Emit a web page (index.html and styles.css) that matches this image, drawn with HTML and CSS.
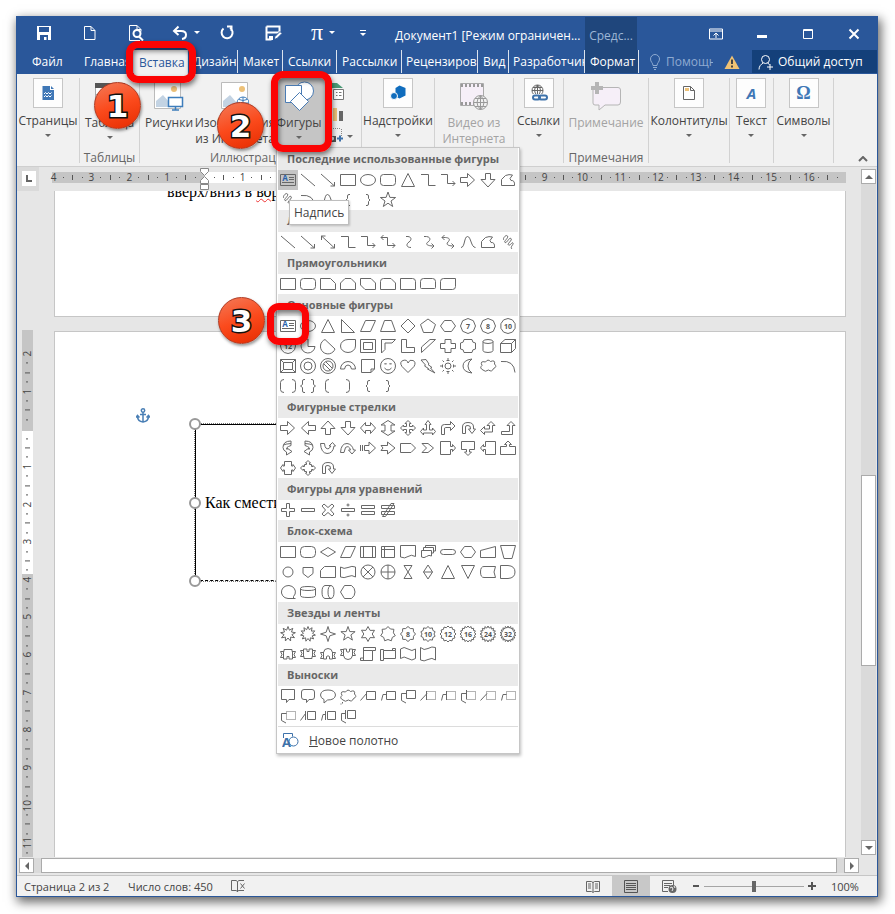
FILE: index.html
```html
<!doctype html>
<html lang="ru">
<head>
    <meta charset="UTF-8">
    <meta name="viewport" content="width=device-width, initial-scale=1.0">
    <title>Документ1 [Режим ограниченной функциональности]</title>
    <link rel="stylesheet" href="styles.css">
</head>
<body>
<div class="window">

    <header class="titlebar">
        <div class="quick">
            <button aria-label="Сохранить"><svg width="16" height="16" viewBox="0 0 16 16"><path d="M1 1h14v14H1z" fill="#fff"/><path d="M3 2h10v5H3zM4 10h8v5h-1.500v-3H8v3H4z" fill="#2a579a"/></svg></button>
            <button aria-label="Создать"><svg width="16" height="16" viewBox="0 0 16 16"><path d="M2.500 1.500h6.500l4 4v9H2.500zM9 1.500v4h4" class="w"/></svg></button>
            <button aria-label="Просмотр"><svg width="16" height="18" viewBox="0 0 16 18"><path d="M12 16.500H1.500v-15H9l4 4v2M9 1.500v4h4" class="w"/><circle cx="9" cy="9.500" r="3.500" class="w2"/><path d="M11 12.500l4 4" class="w2"/></svg></button>
            <button class="wide" aria-label="Отменить"><svg width="16" height="16" viewBox="0 0 16 16"><path d="M6.500 1.500L2 6l4.500 4M2.500 6H9c7 0 6 7.500 1 8" class="w2"/></svg><i class="caret light"></i></button>
            <button class="redo" aria-label="Повторить"><svg width="16" height="16" viewBox="0 0 16 16"><path d="M4.500 3.500A5.500 5.500 0 1 0 11 3M8 1.500h4.500V6" class="w2"/></svg></button>
            <button class="saveas" aria-label="Сохранить как"><svg width="17" height="16" viewBox="0 0 17 16"><path d="M1.500 1.500h13v6M1.500 1.500v13h5" class="w2"/><path d="M2 7.500h12" class="w2"/><path d="M4 11h4v4H4z" fill="#fff"/><path d="M9 14.500l1-3 5-5 2 2-5 5z" fill="#fff" stroke="#2a579a"/></svg></button>
            <button class="pi" aria-label="Уравнение"><span>π</span><i class="caret light"></i></button>
            <button class="more" aria-label="Настройка"><svg width="8" height="8" viewBox="0 0 8 8"><path d="M1 1.500h6" class="w"/><path d="M1 4h6L4 7z" fill="#fff"/></svg></button>
        </div>
        <div class="title">Документ1 [Режим ограничен...</div>
        <div class="context">Средс...</div>
        <div class="winbtns">
            <button aria-label="Параметры ленты"><svg width="14" height="12" viewBox="0 0 14 12"><path d="M.5 1h13v10H.5zM.5 3h13M7 10V5M4.500 7.500L7 5l2.500 2.500" class="w"/></svg></button>
            <button aria-label="Свернуть"><svg width="12" height="12" viewBox="0 0 12 12"><path d="M1 8.500h10" class="w3"/></svg></button>
            <button aria-label="Развернуть"><svg width="12" height="12" viewBox="0 0 12 12"><path d="M1.500 1.500h9v9h-9zM1 2.500h10" class="w"/></svg></button>
            <button aria-label="Закрыть"><svg width="12" height="12" viewBox="0 0 12 12"><path d="M1.500 1.500l9 9M10.500 1.500l-9 9" class="w2"/></svg></button>
        </div>
    </header>

    <nav class="tabs">
        <button class="file">Файл</button>
        <button class="home">Главная</button>
        <button class="active">Вставка</button>
        <button class="design">Дизайн</button>
        <button class="layout">Макет</button>
        <button class="refs">Ссылки</button>
        <button class="mail">Рассылки</button>
        <button class="review">Рецензирование</button>
        <button class="view">Вид</button>
        <button class="dev">Разработчик</button>
        <button class="format">Формат</button>
        <button class="tell"><svg width="12" height="16" viewBox="0 0 12 16"><path d="M4 11.500C4 9 1.500 8 1.500 5a4.500 4.500 0 0 1 9 0c0 3-2.500 4-2.500 6.500zM4 13.500h4M5 15.500h2"/></svg><span>Помощник</span></button>
        <svg class="warn" width="16" height="14" viewBox="0 0 16 14"><path d="M8 0.500L15.500 14H0.500z" fill="#f0c274"/><path d="M7 4.500h2v4.500H7zM7 10.500h2v2H7z" fill="#444"/></svg>
        <button class="share"><svg width="16" height="16" viewBox="0 0 16 16"><circle cx="7.500" cy="5.500" r="4" class="w"/><path d="M1 15.500c0-3.500 2-5 4-6.500M9.500 9l2 1.500M12 10v6M9 13h6" class="w"/></svg>Общий доступ</button>
    </nav>

    <div class="ribbon">
        <div class="group pages">
            <button class="cmd"><span class="box"><svg width="12" height="14" viewBox="0 0 12 14"><path d="M.5 0H8v4h4v10H.5z" fill="#3f77b6"/><path d="M9 0l3 3H9z" fill="#3f77b6"/><path d="M2 8l1.500-1.500L5 8l1.500-1.500L8 8l1.500-1.500M2 11l1.500-1.500L5 11l1.500-1.500L8 11l1.500-1.500" fill="none" stroke="#fff"/></svg></span>Страницы<i class="caret"></i></button>
        </div>
        <div class="group tables">
            <button class="cmd"><svg class="ico" width="30" height="28" viewBox="0 0 30 28"><path d="M.5 5.500h29v22H.5zM.5 12.500h29M.5 20h29M10 5v22M20 5v22" fill="#fff" stroke="#aaa"/><path d="M0 1h30v5H0z" fill="#555"/></svg>Таблица<i class="caret"></i></button>
            <div class="name">Таблицы</div>
        </div>
        <div class="group pics">
            <div class="row">
                <button class="cmd c1"><svg class="ico" width="30" height="30" viewBox="0 0 30 30"><path d="M.5 1.500h26v26H.5z" fill="#fff" stroke="#bbb"/><circle cx="20" cy="8" r="3" fill="#edc178"/><path d="M2 26V20l7-6 7 8v4z" fill="#c3d3e3"/><path d="M14.500 16.500h14v9h-14z" fill="#fff" stroke="#3e7dbb" stroke-width="1.500"/><path d="M18 29h7M21.500 26v3" stroke="#3e7dbb" stroke-width="1.500"/></svg>Рисунки</button>
                <button class="cmd c2"><svg class="ico" width="28" height="30" viewBox="0 0 28 30"><path d="M.5 1.500h26v26H.5z" fill="#fff" stroke="#bbb"/><circle cx="21" cy="8" r="3" fill="#edc178"/><path d="M2 26V20l7-6 7 8v4z" fill="#c3d3e3"/><circle cx="22" cy="22" r="6" fill="#fff" stroke="#3e7dbb"/><path d="M16 22h12M22 16v12M18 18.500q4 2 8 0" fill="none" stroke="#3e7dbb"/></svg>Изображения<br>из Интернета</button>
                <div class="shapes">
                    <button class="cmd on"><svg class="ico" width="30" height="30" viewBox="0 0 30 30"><g fill="#fff" stroke="#4b7cb4"><circle cx="20.500" cy="10" r="9"/><path d="M1.500 4.500h16v17h-16z"/><path d="M15.500 11.500l9 9-9 9-9-9z"/></g></svg>Фигуры<i class="caret"></i></button>
                    <div class="menu" id="menu">
                        <div id="gallery"></div>
                        <button class="canvas"><svg width="17" height="16" viewBox="0 0 17 16"><path d="M1.500 6V1.500h9v3" fill="none" stroke="#3e72aa"/><circle cx="11.500" cy="9.500" r="4.500" fill="none" stroke="#3e72aa"/><text x="0" y="15" font-size="13" font-weight="700" fill="#3e72aa">A</text></svg><span><u>Н</u>овое полотно</span></button>
                        <div class="tip" role="tooltip">Надпись</div>
                    </div>
                </div>
                <div class="mini">
                    <svg width="18" height="18" viewBox="0 0 18 18"><path d="M0 0h10l6 5H0z" fill="#4a9a76"/><path d="M6.500 6.500h10v10h-10z" fill="#fff" stroke="#777"/><path d="M9 9.500h1.500M12 9.500h2.500M9 12.500h1.500M12 12.500h2.500" stroke="#777"/></svg>
                    <svg width="18" height="15" viewBox="0 0 18 15"><path d="M1 3h3v11H1z" fill="#3e72aa"/><path d="M6 1h4v13H6z" fill="#edc178"/><path d="M12 4h4v10h-4z" fill="#666"/></svg>
                    <span><svg width="18" height="16" viewBox="0 0 18 16"><path d="M2 .5h12M14.500 1v8" stroke="#888" stroke-dasharray="1 1"/><path d="M0 6h4l1 2h4v6H0z" fill="#555"/><circle cx="5" cy="10.500" r="2" fill="#eee"/><path d="M13 7.500v6M10 10.500h6" stroke="#3e72aa" stroke-width="2"/></svg><i class="caret"></i></span>
                </div>
            </div>
            <div class="name">Иллюстрации</div>
        </div>
        <div class="group addins">
            <button class="cmd"><span class="box"><svg width="16" height="16" viewBox="0 0 16 16"><path d="M9.500.5l6 2.500v7.500l-6 3-4-2V3z" fill="#0f6cbd"/><circle cx="4" cy="11" r="3.500" fill="#0f6cbd" stroke="#fdfdfd"/></svg></span>Надстройки<i class="caret"></i></button>
        </div>
        <div class="group video">
            <button class="cmd off" disabled><svg class="ico" width="30" height="28" viewBox="0 0 30 28"><path d="M1.500 1.500h23v22h-23z" fill="#f6eff8" stroke="#aaa"/><path d="M2 3.500h22M2 21.500h22" stroke="#999" stroke-width="3" stroke-dasharray="2 2"/><circle cx="21.500" cy="20.500" r="7" fill="#f1f1f1" stroke="#999"/><path d="M14.500 20.500h14M21.500 13.500v14M16 16.500h11M16 24.500h11M21.500 13.500q-7 7 0 14M21.500 13.500q7 7 0 14" fill="none" stroke="#999"/></svg>Видео из<br>Интернета</button>
        </div>
        <div class="group links">
            <button class="cmd"><span class="box"><svg width="18" height="18" viewBox="0 0 18 18"><g fill="none" stroke="#666"><circle cx="7.500" cy="6.500" r="5.500"/><path d="M2 6.500h11M7.500 1v10M7.500 1q-6 5 0 11M7.500 1q6 5 0 11M3 3.500h9"/></g><path d="M0 10h18v8H0z" fill="#fdfdfd"/><g fill="none" stroke="#3e72aa" stroke-width="2"><rect x="3" y="11.500" width="7" height="4" rx="2"/><rect x="9" y="11.500" width="8" height="4" rx="2"/></g></svg></span>Ссылки<i class="caret"></i></button>
        </div>
        <div class="group notes">
            <button class="cmd off" disabled><svg class="ico" width="32" height="30" viewBox="0 0 32 30"><path d="M5 6.500h23q2.500 0 2.500 2.500v12q0 3-2.500 3H15l-6 5v-5H5q-2 0-2-2V8z" fill="#f6eff8" stroke="#b5b5b5"/><path d="M7 1v12M1 7h12" stroke="#b5b5b5" stroke-width="4"/></svg>Примечание</button>
            <div class="name">Примечания</div>
        </div>
        <div class="group headers">
            <button class="cmd"><span class="box"><svg width="12" height="14" viewBox="0 0 12 14"><path d="M.5.500h7l4 4v9H.500zM7.500.500v4h4" fill="#fff" stroke="#666"/><path d="M2 2h4v3H2z" fill="#edc178"/></svg></span>Колонтитулы<i class="caret"></i></button>
        </div>
        <div class="group text">
            <button class="cmd"><span class="box letter"><em>A</em></span>Текст<i class="caret"></i></button>
        </div>
        <div class="group symbols">
            <button class="cmd"><span class="box letter">Ω</span>Символы<i class="caret"></i></button>
        </div>
        <button class="collapse" aria-label="Свернуть ленту"><svg width="10" height="6" viewBox="0 0 10 6"><path d="M1 5l4-4 4 4" fill="none" stroke="#666" stroke-width="2"/></svg></button>
    </div>

    <main class="work">
        <div class="hrow">
            <div class="corner"><i></i></div>
            <div class="hruler"><div id="hruler"></div>
                <svg class="indent" width="11" height="23" viewBox="0 0 11 23"><path d="M1.500.500h8v3l-4 4-4-4zM5.500 8.500l4 4v3h-8v-3zM1.500 16.500h8v5h-8z" fill="#fff" stroke="#888"/></svg>
            </div>
        </div>
        <div class="vcol"><div class="vruler" id="vruler"></div></div>
        <div class="pages-area">
            <section class="page first"><p>вверх/вниз в <span class="err">ворде</span></p></section>
            <section class="page second">
                <svg class="anchor" width="14" height="15" viewBox="0 0 14 15"><g fill="none" stroke="#4a7fb5" stroke-width="1.500"><circle cx="7" cy="2.500" r="1.700"/><path d="M7 4v10M4 6.500h6M1.500 8q0 5.500 5.500 6 5.500-.5 5.500-6M0 9.500l1.500-2 2 2M10.500 9.500l2-2 1.500 2"/></g></svg>
                <div class="frame"><span>Как сместить текст</span><i class="h tl"></i><i class="h ml"></i><i class="h bl"></i></div>
            </section>
        </div>
        <div class="vscroll">
            <button aria-label="Вверх"><i class="tri up"></i></button>
            <div class="track"><div class="thumb"></div></div>
            <button aria-label="Вниз"><i class="tri down"></i></button>
        </div>
        <div class="hscroll">
            <button aria-label="Влево"><i class="tri left"></i></button>
            <div class="thumb"></div>
            <button aria-label="Вправо"><i class="tri right"></i></button>
        </div>
    </main>

    <footer class="status">
        <span class="pagenum">Страница 2 из 2</span>
        <span class="words">Число слов: 450</span>
        <svg width="15" height="13" viewBox="0 0 15 13"><path d="M6.500 11.500L5 10.500H.5v-10H5l1.500 1zM6.500 1.500L8 .5h5M6.500 12v-1l1.500-.500h5M9.500 3.500l4 5M13.500 3.500l-4 5" fill="none" stroke="#666"/></svg>
        <div class="right">
            <button aria-label="Режим чтения"><svg width="14" height="13" viewBox="0 0 14 13"><path d="M7 12.500l-1.500-1h-5v-10h5l1.500 1 1.500-1h5v10h-5zM7 2v10M2 4h3M2 6h3M2 8h3M9 4h3M9 6h3M9 8h3" fill="none" stroke="#666"/></svg></button>
            <button class="on" aria-label="Разметка страницы"><svg width="14" height="13" viewBox="0 0 14 13"><path d="M.5.500h13v12H.5zM2 3.500h10M2 5.500h10M2 7.500h10M2 9.500h10" fill="none" stroke="#555"/></svg></button>
            <button aria-label="Веб-документ"><svg width="15" height="13" viewBox="0 0 15 13"><path d="M6 11.500H.5V.500h11v5M2 3.500h8M2 5.500h6M2 7.500h4" fill="none" stroke="#666"/><circle cx="10.500" cy="9" r="4" fill="#666"/><path d="M8 8l2-1 1 2-1 2M12 6l1 2" fill="none" stroke="#f1f1f1"/></svg></button>
            <button class="zoom" aria-label="Уменьшить"><svg width="8" height="8" viewBox="0 0 8 8"><path d="M1 4h6" stroke="#555" stroke-width="2"/></svg></button>
            <input type="range" min="0" max="100" value="50" aria-label="Масштаб">
            <button class="zoom" aria-label="Увеличить"><svg width="8" height="8" viewBox="0 0 8 8"><path d="M0 4h8M4 0v8" stroke="#555" stroke-width="2"/></svg></button>
            <span class="percent">100%</span>
        </div>
    </footer>

    <!-- шаги инструкции -->
    <div class="mark m1"></div>
    <div class="mark m2"></div>
    <div class="mark m3"></div>
    <div class="step s1">1</div>
    <div class="step s2">2</div>
    <div class="step s3">3</div>
</div>
<script src="shapes.js"></script>
</body>
</html>
```
FILE: styles.css
```css
* {
    box-sizing: border-box;
}
body {
    margin: 0;
    padding: 16px 17px 17px 16px;
    height: 100vh;
    display: flex;
    background: #fff;
    font-family: "Open Sans", "Noto Sans", sans-serif;
    font-size: 12px;
    color: #444;
}
button {
    margin: 0;
    padding: 0;
    border: 0;
    background: none;
    font: inherit;
    color: inherit;
    white-space: nowrap;
}
svg {
    display: block;
    flex: none;
}
.window {
    position: relative;
    flex: 1;
    min-width: 0;
    display: flex;
    flex-direction: column;
    border: 1px solid #2a579a;
    background: #e6e6e6;
    box-shadow: 2px 4px 10px 1px rgba(0, 0, 0, .6);
}
.w, .w2, .w3 {
    fill: none;
    stroke: #fff;
    stroke-width: 1;
}
.w2 {
    stroke-width: 2;
}
.w3 {
    stroke-width: 3;
}
.caret {
    border: 3px solid transparent;
    border-top-color: #666;
    border-bottom: 0;
}
.caret.light {
    border-top-color: #fff;
}

/* title bar */
.titlebar {
    flex: none;
    height: 33px;
    display: flex;
    background: #2a579a;
    color: #fff;
}
.quick {
    display: flex;
    padding-left: 4px;
}
.quick button {
    width: 46px;
    padding-bottom: 2px;
    display: flex;
    align-items: center;
    justify-content: center;
    gap: 6px;
}
.quick .wide {
    width: 48px;
    padding-left: 6px;
}
.quick .redo {
    width: 40px;
}
.quick .saveas {
    width: 52px;
}
.quick .pi {
    width: 48px;
}
.pi span {
    font: 24px "Liberation Serif", serif;
}
.quick .more {
    width: 32px;
}
.title {
    width: 206px;
    padding-left: 16px;
    line-height: 37px;
    white-space: nowrap;
}
.context {
    width: 52px;
    background: #1f467c;
    color: #9db6d6;
    text-align: center;
    line-height: 37px;
}
.winbtns {
    margin-left: auto;
    display: flex;
}
.winbtns button {
    width: 46px;
    display: flex;
    align-items: center;
    justify-content: center;
}

/* tabs */
.tabs {
    flex: none;
    height: 24px;
    display: flex;
    background: #2a579a;
    color: #fff;
}
.tabs button {
    flex: none;
    overflow: hidden;
    text-align: left;
    padding-left: 5px;
    margin-bottom: 1px;
    line-height: 23px;
    border-right: 1px solid #dbe3ee;
}
.tabs .file {
    width: 62px;
    padding-left: 15px;
    border: 0;
}
.tabs .home {
    width: 55px;
}
.tabs .active {
    width: 54px;
    margin-bottom: 0;
    background: #f1f1f1;
    color: #2a579a;
}
.tabs .design {
    width: 50px;
}
.tabs .layout {
    width: 45px;
}
.tabs .refs {
    width: 54px;
}
.tabs .mail {
    width: 65px;
}
.tabs .review {
    width: 76px;
    padding-left: 4px;
}
.tabs .view {
    width: 31px;
}
.tabs .dev {
    width: 76px;
    padding-left: 4px;
}
.tabs .format {
    width: 54px;
    background: #1f467c;
}
.tabs .tell {
    width: 75px;
    padding-left: 10px;
    border: 0;
    display: flex;
    align-items: center;
    gap: 5px;
    color: #8fabd1;
}
.tell path {
    fill: none;
    stroke: #8fabd1;
}
.tell span {
    width: 47px;
    overflow: hidden;
}
.warn {
    margin: 5px 12px 0 10px;
}
.tabs .share {
    flex: 1;
    display: flex;
    align-items: center;
    gap: 4px;
    padding-left: 6px;
    border: 0;
    background: #14407a;
}

/* ribbon */
.ribbon {
    flex: none;
    height: 93px;
    display: flex;
    padding: 4px 0 3px;
    background: #f1f1f1;
    border-bottom: 1px solid #cfcfcf;
}
.group {
    flex: none;
    display: flex;
    flex-direction: column;
    align-items: center;
    border-right: 1px solid #d2d2d2;
}
.pages {
    width: 63px;
}
.tables {
    width: 60px;
}
.pics {
    width: 222px;
}
.addins {
    width: 73px;
}
.video {
    width: 79px;
}
.links {
    width: 50px;
}
.notes {
    width: 85px;
}
.headers {
    width: 81px;
}
.text {
    width: 44px;
}
.symbols {
    width: 60px;
}
.cmd {
    display: flex;
    flex-direction: column;
    align-items: center;
    line-height: 16px;
    text-align: center;
}
.cmd.off {
    color: #a3a3a3;
}
.cmd .caret {
    margin-top: 5px;
}
.box {
    width: 30px;
    height: 30px;
    margin-bottom: 5px;
    display: flex;
    align-items: center;
    justify-content: center;
    background: #fdfdfd;
    border: 1px solid #c6c6c6;
}
.ico {
    height: 30px;
    margin: 3px 0 4px;
}
.letter {
    font: 700 18px "Liberation Serif", serif;
    color: #3f77b6;
}
.letter em {
    font-family: "Open Sans", sans-serif;
    font-size: 15px;
}
.name {
    margin-top: auto;
    line-height: 10px;
    color: #666;
}
.row {
    display: flex;
    align-self: stretch;
    padding-left: 1px;
}
.cmd.c1 {
    width: 56px;
}
.cmd.c2 {
    width: 76px;
}
.shapes {
    position: relative;
    width: 52px;
}
.cmd.on {
    width: 52px;
    height: 70px;
    background: #c5c5c5;
}
.mini {
    padding: 5px 0 0 2px;
    display: flex;
    flex-direction: column;
    gap: 6px;
}
.mini span {
    display: flex;
    align-items: center;
    gap: 2px;
}
.collapse {
    margin: auto 9px 1px auto;
}

/* shapes drop-down */
.menu {
    position: absolute;
    z-index: 5;
    left: 3px;
    top: 69px;
    width: 244px;
    padding: 0 1px;
    background: #fff;
    border: 1px solid #c6c6c6;
    box-shadow: 1px 2px 3px rgba(0, 0, 0, .25);
}
.menu h3 {
    margin: 0;
    padding-left: 9px;
    height: 22px;
    line-height: 22px;
    font-size: 11px;
    font-weight: 700;
    white-space: nowrap;
    color: #666;
    background: #eaeaea;
}
.cells {
    display: grid;
    grid-template-columns: repeat(12, 20px);
}
.cells button {
    width: 20px;
    height: 20px;
}
.cells button.sel {
    background: #c5c5c5;
}
.cells svg {
    fill: none;
    stroke: #686868;
}
.cells text {
    stroke: none;
    fill: #555;
    font-size: 7px;
    font-weight: 700;
    text-anchor: middle;
}
.cells .a {
    fill: #2a62ab;
    font-size: 8px;
}
.canvas {
    width: 100%;
    height: 27px;
    padding-left: 4px;
    display: flex;
    align-items: center;
    gap: 10px;
    border-top: 1px solid #dcdcdc;
}
.tip {
    position: absolute;
    left: 12px;
    top: 52px;
    padding: 0 4px;
    line-height: 23px;
    background: #fff;
    border: 1px solid #bebebe;
    box-shadow: 1px 1px 2px rgba(0, 0, 0, .2);
}

/* document area */
.work {
    flex: 1;
    min-height: 0;
    display: grid;
    grid-template-columns: 37px 1fr 31px;
    grid-template-rows: 24px minmax(0, 1fr) 18px;
}
.hrow {
    grid-column: 1 / 3;
    display: flex;
}
.corner {
    width: 22px;
    padding: 4px 3px 3px 5px;
    background: #dadada;
}
.corner i {
    display: block;
    height: 15px;
    background: #fff;
    border: 4px solid #fff;
    box-shadow: inset 2px -2px #666;
}
.hruler {
    position: relative;
    flex: 1;
    margin: 5px 0 8px 10px;
    padding-right: 4px;
    background: linear-gradient(90deg, transparent 3px, #c5c5c5 3px, #c5c5c5 155px, #fff 155px, #fff 420px, #c5c5c5 420px);
}
.hruler > div {
    display: grid;
    grid-template-columns: repeat(84, minmax(0, 1fr));
}
.indent {
    position: absolute;
    left: 150px;
    top: -4px;
}
.mk {
    display: flex;
    align-items: center;
    justify-content: center;
    height: 11px;
    font-size: 10px;
    line-height: 11px;
    color: #444;
}
.mk i {
    flex: none;
    width: 1px;
    height: 5px;
    background: #555;
}
.mk .dot {
    height: 1px;
}
.vcol {
    min-height: 0;
    padding: 139px 21px 0 5px;
}
.vruler {
    height: 100%;
    overflow: hidden;
    padding-top: 19px;
    display: grid;
    grid-template-rows: repeat(54, minmax(0, 1fr));
    background: linear-gradient(#c5c5c5 101px, #fff 101px, #fff 244px, #c5c5c5 244px);
}
.vruler .mk {
    height: auto;
    writing-mode: vertical-rl;
    transform: rotate(180deg);
}
.vruler .mk i {
    width: 5px;
    height: 1px;
}
.vruler .mk .dot {
    width: 2px;
}
.pages-area {
    min-height: 0;
    display: flex;
    flex-direction: column;
    gap: 14px;
}
.page {
    position: relative;
    overflow: hidden;
    background: #fff;
    border: 1px solid #c6c6c6;
    font: 16px "Liberation Serif", serif;
    color: #000;
}
.first {
    flex: none;
    height: 126px;
    border-top: 0;
}
.first p {
    margin: 0 112px;
    line-height: 1px;
}
.err {
    text-decoration: underline wavy #e33 1px;
}
.second {
    flex: 1;
    border-bottom: 0;
    padding: 76px 0 0 81px;
}
.frame {
    position: relative;
    width: 240px;
    height: 157px;
    margin: 1px 0 0 59px;
    padding-left: 9px;
    display: flex;
    align-items: center;
    border: 1px solid #000;
    border-bottom-style: dashed;
    outline: 1px dotted #777;
}
.h {
    position: absolute;
    left: -7px;
    width: 12px;
    height: 12px;
    border: 2px solid #999;
    border-radius: 50%;
    background: #fff;
}
.tl {
    top: -7px;
}
.ml {
    top: 72px;
}
.bl {
    bottom: -7px;
}

/* scroll bars */
.vscroll {
    grid-column: 3;
    grid-row: 1 / 3;
    margin: 2px 0 2px auto;
    width: 16px;
    display: flex;
    flex-direction: column;
}
.vscroll button,
.hscroll button {
    flex: none;
    width: 15px;
    height: 15px;
    display: flex;
    align-items: center;
    justify-content: center;
    background: #fff;
    border: 1px solid #ababab;
}
.track {
    flex: 1;
    width: 15px;
    padding-top: 291px;
    background: #dadada;
}
.track .thumb {
    height: 191px;
}
.thumb {
    background: #fff;
    border: 1px solid #ababab;
}
.hscroll {
    grid-column: 1 / 4;
    margin: 1px 18px 2px 2px;
    display: flex;
    gap: 7px;
    background: #dadada;
}
.hscroll .thumb {
    flex: 1;
}
.tri {
    border: 4px solid transparent;
}
.up {
    border-top: 0;
    border-bottom-color: #666;
}
.down {
    border-bottom: 0;
    border-top-color: #666;
}
.left {
    border-left: 0;
    border-right-color: #666;
}
.right.tri {
    border-right: 0;
    border-left-color: #666;
}

/* status bar */
.status {
    flex: none;
    height: 21px;
    display: flex;
    align-items: center;
    padding-left: 7px;
    background: #f1f1f1;
    border-top: 1px solid #c6c6c6;
    font-size: 11px;
}
.pagenum {
    width: 104px;
}
.words {
    width: 103px;
}
.status .right {
    margin-left: auto;
    align-self: stretch;
    display: flex;
    align-items: center;
}
.status button {
    width: 38px;
    align-self: stretch;
    display: flex;
    align-items: center;
    justify-content: center;
}
.status button.on {
    background: #c8c8c8;
}
.status .zoom {
    width: 16px;
}
.status input {
    width: 100px;
    height: 12px;
    margin: 0;
    appearance: none;
    background: linear-gradient(#a5a5a5, #a5a5a5) center / 100% 1px no-repeat;
}
.status input::-webkit-slider-thumb {
    appearance: none;
    width: 4px;
    height: 11px;
    background: #666;
}
.percent {
    width: 57px;
    padding-left: 11px;
}

/* red frames and numbers */
.mark {
    position: absolute;
    z-index: 8;
    border: 7px solid #fb0404;
    border-radius: 12px;
    box-shadow: 1px 3px 5px rgba(0, 0, 0, .5), inset 1px 3px 5px rgba(0, 0, 0, .5);
}
.m1 {
    left: 109px;
    top: 24px;
    width: 70px;
    height: 42px;
}
.m2 {
    left: 254px;
    top: 54px;
    width: 61px;
    height: 81px;
}
.m3 {
    left: 250px;
    top: 286px;
    width: 42px;
    height: 42px;
}
.step {
    position: absolute;
    z-index: 9;
    width: 47px;
    height: 47px;
    border-radius: 50%;
    background: linear-gradient(160deg, #f37a58, #fb4a1c 50%, #e62c00);
    border: 1px solid #b03a22;
    box-shadow: 1px 2px 3px rgba(0, 0, 0, .4);
    color: #fff;
    font: 700 31px/46px "DejaVu Sans", sans-serif;
    text-align: center;
    -webkit-text-stroke: 3px #111;
    paint-order: stroke fill;
}
.s1 {
    left: 77px;
    top: 65px;
}
.s2 {
    left: 200px;
    top: 85px;
}
.s3 {
    left: 201px;
    top: 280px;
}
```
FILE: shapes.js
```js
// outlines are drawn in a 20x20 cell
function oval(x, y, rx, ry) {
    ry = ry || rx
    return 'M' + (x - rx) + ' ' + y + 'a' + rx + ' ' + ry + ' 0 1 0 ' + 2 * rx + ' 0a' + rx + ' ' + ry + ' 0 1 0 ' + -2 * rx + ' 0'
}

function star(n, r1, r2) {
    var p = []
    for (var i = 0; i < n * 2; i++) {
        var r = i % 2 ? r2 : r1
        var a = Math.PI * i / n - Math.PI / 2
        p.push((10 + r * Math.cos(a)).toFixed(1) + ' ' + (10 + r * Math.sin(a)).toFixed(1))
    }
    return 'M' + p.join('L') + 'z'
}

function poly(n, r) {
    return star(n / 2, r, r)
}

var rect = 'M2.5 4.5H17.5V15.5H2.5z'
var textbox = rect + 'M11 7.5h5M11 9.5h5M4 12.5h12'
var ellipse = oval(10, 10, 7.5, 5.5)
var round = 'M5.5 4.5H14.5q3 0 3 3V12.500q0 3-3 3H5.5q-3 0-3-3V7.5q0-3 3-3z'
var line = 'M3 4L17 16'
var lineArrow = 'M3 4L16.5 16M16.500 12v4h-4'
var elbow = 'M3 4.5H10.5V15.5H17.5'
var elbowArrow = 'M3 4.5H9.5V13.5H17M14.500 11l2.500 2.500-2.500 2.500'
var triangle = 'M10 3.5L16.5 16.5H3.5z'
var arrowR = 'M2.5 7.5H9.5V3.5L16.5 10 9.5 16.5V12.5H2.5z'
var arrowL = 'M17.5 7.5H10.5V3.500L3.5 10 10.500 16.5V12.500H17.500z'
var arrowD = 'M7.500 3.500H12.500V9.500H17L10 17 3 9.500H7.500z'
var arrowU = 'M7.500 16.500H12.500V10.500H17L10 3 3 10.500H7.500z'
var free = 'M3.5 15.5V9.5L7.500 5.5Q11 4 14.500 5L12 8.500 13 10.5Q17 10 16.500 15.5z'
var scribble = 'M6 8C4 7 8 2 9.500 4S5 9.500 7 10.500 11 5 13 6.500 8.500 12 10.500 13 14 9.500 15 11 11.500 15 14 17'
var arc = 'M3 5.5Q16 4 17 16.500'
var curve = 'M3 15.5C7 15.500 6 4.5 9.5 4.5S13 15.5 17.500 15.5'
var braceL = 'M12 4.500h-1q-1.500 0-1.500 1.500v2.500L8 10l1.500 1.500V14q0 1.500 1.500 1.500h1'
var braceR = 'M8 4.500h1q1.500 0 1.500 1.500v2.500L12 10l-1.500 1.500V14q0 1.500-1.500 1.500h-1'
var diamond = 'M10 3L17 10 10 17 3 10z'
var para = 'M7.500 4.5H17.5L12.500 15.5H2.500z'
var hexa = 'M6.500 4.5H13.500L17.5 10 13.500 15.5H6.500L2.5 10z'
var frame = 'M2.5 3.500H17.5V16.500H2.5zM5.500 6.500H14.500V13.500H5.500z'
var cloud = 'M5 14Q1 12 4 9.500 1.500 4.500 7.500 6 10 2.500 12.500 5.500 17.500 3.500 16.500 8 19.500 11 15.500 12.500 14 16.500 10.500 14 7 16.500 5 14z'
var uturn = 'M4.500 15.500V9Q4.500 4.500 10 4.500T15.500 9V11H17.500L14 15.500 10.500 11H12.500Q13 7.500 10 7.500T7.500 9V15.500z'

var groups = [
    ['Последние использованные фигуры', [
        [textbox, 'A'], line, lineArrow, rect, ellipse, round, triangle, elbow, elbowArrow, arrowR, arrowD, free,
        scribble, arc, curve, braceL, braceR, star(5, 8, 3.2)
    ]],
    ['Линии', [
        line, lineArrow, 'M3.500 4L16.5 16M16.500 12v4h-4M3.500 8V4h4', elbow, elbowArrow,
        'M3 5.500H9.5V13.5H17M14.500 11l2.500 2.500-2.500 2.500M5.500 3L3 5.500 5.500 8',
        'M8 4.500C14 4 14 8 11 10S8 15.5 13 15.5',
        'M6 4.500C13 4 13 8 10 10S9 14 16 14M13.500 11.500l2.500 2.500-2.500 2.500',
        'M4 5.500C13 5 12 8 10 10S9 14 16 14M13.500 11.500l2.500 2.500-2.500 2.500M6.500 3L4 5.500 6.500 8',
        curve, free, scribble
    ]],
    ['Прямоугольники', [
        rect, round,
        'M2.5 4.5H12.500L17.5 9.500V15.5H2.5z',
        'M7 4.5H13L17.5 9V15.5H2.5V9z',
        'M2.5 4.5H13L17.5 9V15.5H7L2.5 11z',
        'M5.5 4.5H13L17.5 9V15.5H2.5V7.5q0-3 3-3z',
        'M2.5 4.5H14.5q3 0 3 3V15.5H2.5z',
        'M5.5 4.5H14.5q3 0 3 3V13.500q0 1-1 1H3.500q-1 0-1-1V7.5q0-3 3-3z',
        'M5.5 4.5H17.5V12.5q0 3-3 3H2.5V7.5q0-3 3-3z'
    ]],
    ['Основные фигуры', [
        [textbox, 'A'], ellipse, triangle, 'M3.500 3.500V16.500H16.500z', para, 'M6.500 4.500H13.500L17.5 15.500H2.500z',
        diamond, 'M10 3L17.500 8.500 14.500 16.500H5.500L2.500 8.500z', hexa,
        [poly(8, 7.5), '7'], [poly(8, 7.5), '8'], [poly(10, 7.5), '10'],
        [poly(12, 7.5), '12'],
        'M10 3A7 7 0 1 0 17 10.500H10z', 'M7 3.500A7.500 7.500 0 1 0 17 13z',
        'M17.500 3.500V10A7.500 6.500 0 1 1 10 3.500z', frame,
        'M3.500 3.500H17.500L14 7H7V13.500L3.500 17z', 'M3.500 3.500H8.500V11.500H16.500V16.500H3.500z',
        'M3.500 16.500V11L12 3.500H17.500z', 'M7 3.500H13V7.500H17.5V12.500H13V16.500H7V12.500H2.5V7.500H7z',
        'M6 3.500H14Q14 7 17.500 7V13Q14 13 14 16.500H6Q6 13 2.500 13V7Q6 7 6 3.500z',
        'M5 5.500Q5 3.500 10 3.500T15 5.500V14.500Q15 16.500 10 16.500T5 14.500zM5 5.500Q5 7.500 10 7.500T15 5.500',
        'M2.500 7.500L7 3.500H17.5V12.500L13.500 16.500H2.500zM2.500 7.500H13.500V16.500M13.500 7.500L17.500 3.500',
        frame + 'M2.500 3.500l3 3M17.500 3.500l-3 3M2.500 16.500l3-3M17.500 16.500l-3-3',
        oval(10, 10, 7.5) + oval(10, 10, 4),
        oval(10, 10, 7.5) + oval(10, 10, 5) + 'M6 8L12 14M8 6L14 12',
        'M2.500 13A7.500 7.500 0 0 1 17.500 13H13.500Q13 9 10 9T6.500 13z',
        'M3.500 3.500H16.500V13L13 16.500H3.500zM13 16.500V13H16.500',
        oval(10, 10, 7.5) + 'M6.500 12Q10 16 13.500 12M7 7v1.500M13 7v1.500M8 7v1.500M12 7v1.500',
        'M10 16.500L4 10.500Q1 6 5 4.500T10 7Q11.500 3 15 4.500T16 10.500z',
        'M3 4L8 3.500 11 8 10 8.500 14 11.500 12.500 12 17 17 9.500 13 10.500 12.500 6.500 10 7.500 9z',
        oval(10, 10, 3) + 'M10 2v2M10 16v2M2 10h2M16 10h2M4.500 4.500l1.500 1.500M15.500 4.500l-1.500 1.500M4.500 15.500l1.500-1.500M15.500 15.500l-1.500-1.500M8.500 4.500h3M8.500 15.500h3M4.500 8.500v3M15.500 8.500v3',
        'M14 3Q5 4 5 10T14 17Q10 14.500 10 10T14 3z', cloud, arc,
        'M6 3.500Q2.500 3.500 2.500 6.500V13.500Q2.500 16.500 6 16.500M14 3.500Q17.500 3.500 17.500 6.500V13.500Q17.500 16.500 14 16.500',
        'M7 3.500H6Q4.500 3.500 4.500 5V8.500L2.500 10 4.500 11.500V15Q4.500 16.500 6 16.500H7M13 3.500H14Q15.500 3.500 15.500 5V8.500L17.500 10 15.500 11.500V15Q15.500 16.500 14 16.500H13',
        'M11 3.500Q7.500 3.500 7.500 6.500V13.500Q7.500 16.500 11 16.500', 'M8 3.500Q11.500 3.500 11.500 6.500V13.500Q11.500 16.500 8 16.500',
        braceL, braceR
    ]],
    ['Фигурные стрелки', [
        arrowR, arrowL, arrowU, arrowD,
        'M2.500 10L7.500 4.500V7.500H12.500V4.500L17.500 10 12.500 15.500V12.500H7.500V15.500z',
        'M10 2.500L17 7H13V13H17L10 17.500 3 13H7V7H3z',
        'M10 2.500L13 5.500H11.500V8.500H14.500V7L17.500 10 14.500 13V11.500H11.500V14.500H13L10 17.500 7 14.500H8.500V11.500H5.500V13L2.500 10 5.500 7V8.500H8.500V5.500H7z',
        'M10 2.500L13 6.500H11.500V12H14.500V10L17.500 13.500 14.500 17V15H5.500V17L2.500 13.500 5.500 10V12H8.500V6.500H7z',
        'M3.500 16.500V9Q3.500 6.500 6.500 6.500H12.500V3.500L17 8 12.500 12.500V9.500H7.500Q6.500 9.500 6.500 11V16.500z',
        uturn,
        'M2.500 12.500L6.500 8.500V11H11.500V7.500H9L13 3.500 17 7.500H14.500V14H6.500V16.500z',
        'M3.500 16.500V13.500H11.500V7.500H9L13 3.500 17 7.500H14.500V16.500z',
        'M13 3Q5 3 5 9.500 5 12.500 8.500 14V17L14 13.500 9 10V11.500Q7 9.500 13 7.500zM5.500 7Q7 6 13 5.500',
        'M7 3Q15 3 15 9.500 15 12.500 11.500 14V17L6 13.500 11 10V11.500Q13 9.500 7 7.500zM14.500 7Q13 6 7 5.500',
        'M2.500 5.500H6.500Q7 12 11 10.500L13 8H11L14.500 4.500 17.500 8H16Q15 15.500 9 15.500 3 15 2.500 5.500z',
        'M2.500 14.500Q3 5.500 9 5.500 14 6 15.500 12H17.500L14 16 10.500 12H12.500Q11 7 7.500 9.500L6 14.500z',
        'M2.500 7v6M4.500 7v6M6.500 7.500H11V4L17.500 10 11 16V12.500H6.500z',
        'M3 7.500H9.500V4L17 10 9.500 16V12.500H3L5 10z',
        'M2.500 5.500H13L17.500 10 13 14.500H2.500z', 'M4 5.500H10L15.500 10 10 14.500H4L8.500 10z',
        'M2.500 3.500H12.500V8.500H14.500V6.500L17.500 10 14.500 13.500V11.500H12.500V16.500H2.500z',
        'M3.500 3.500H16.500V11.500H11.500V14H13.500L10 17.500 6.500 14H8.500V11.500H3.500z',
        'M17.500 3.500H7.500V8.500H5.500V6.500L2.500 10 5.500 13.500V11.500H7.500V16.500H17.500z',
        'M2.500 16.500H17.500V8.500H11.500V6.500H13.500L10 3 6.500 6.500H8.500V8.500H2.500z',
        'M6.500 3.500H13.500V8H15V6.500L17.500 10 15 13.500V12H13.500V16.500H6.500V12H5V13.500L2.500 10 5 6.500V8H6.500z',
        'M10 2.500L12.500 5H11.500V6.500H13.500V8.500H15V7.500L17.500 10 15 12.500V11.500H13.500V13.500H11.500V15H12.500L10 17.500 7.500 15H8.500V13.500H6.500V11.500H5V12.500L2.500 10 5 7.500V8.500H6.500V6.500H8.500V5H7.500z',
        uturn
    ]],
    ['Фигуры для уравнений', [
        'M8.500 3.500H11.500V8.500H16.500V11.500H11.500V16.500H8.500V11.500H3.500V8.500H8.500z', 'M3.500 8.500H16.500V11.500H3.500z',
        'M6 4L10 7.500 14 4 16 6 12.500 10 16 14 14 16 10 12.500 6 16 4 14 7.500 10 4 6z',
        'M3.500 8.500H16.500V11.500H3.500z' + oval(10, 5, 1) + oval(10, 15, 1),
        'M3.500 5.500H16.500V8.500H3.500zM3.500 11.500H16.500V14.500H3.500z',
        'M3.500 5.500H16.500V8.500H3.500zM3.500 11.500H16.500V14.500H3.500zM4.500 16.500L13 3.500H16L7.500 16.500z'
    ]],
    ['Блок-схема', [
        rect, 'M6.500 4.5H13.5q4 0 4 4V11.500q0 4-4 4H6.5q-4 0-4-4V8.5q0-4 4-4z', 'M10 5.500L17.500 10 10 14.500 2.500 10z', para,
        rect + 'M5.500 4.500V15.500M14.500 4.500V15.500', 'M3.500 4.500H16.500V15.500H3.500zM6.500 4.500V15.500M3.500 7.500H16.500',
        'M2.500 3.500H17.500V14.500Q13 12 10 14.500T2.500 15z',
        'M5.500 8V5.500H15.500V11H13.500M7.500 5.500V3.500H17.500V9H15.500M3.500 8.500H13.500V14Q11 12.500 8.500 14.500T3.500 15z',
        'M5.500 7.500H14.500q3 0 3 2.500t-3 2.500H5.500q-3 0-3-2.500t3-2.500z', hexa, 'M2.500 8.500L17.500 4.500V15.500H2.500z',
        'M2.500 3.500H17.500L14 16.500H6z',
        oval(10, 10, 5), 'M5 5.500H15V11.500L10 15.500 5 11.500z', 'M6.500 4.500H17.500V15.500H2.500V8.500z',
        'M2.500 5Q6 7.500 10 5.500T17.500 5V15Q14 12.500 10 14.500T2.500 15z',
        oval(10, 10, 7) + 'M5 5L15 15M15 5L5 15', oval(10, 10, 7) + 'M3 10H17M10 3V17',
        'M6 3.500H14L6 16.500H14z', 'M10 3L14.500 10 10 17 5.500 10zM5.500 10H14.500',
        triangle, 'M3.500 3.500H16.500L10 16.500z', 'M6 4.500H17.500Q14.500 10 17.500 15.500H6Q2.500 15.500 2.500 10T6 4.500z',
        'M2.500 3.500H10Q17 4 17 10T10 16.500H2.500z',
        'M17.500 16.500H10A7 6.500 0 1 1 15.500 14.500V16.500',
        'M2.500 6.500Q2.500 4.500 10 4.500T17.500 6.500V13.500Q17.500 15.500 10 15.500T2.500 13.500zM2.500 6.500Q2.500 8.500 10 8.500T17.500 6.500',
        'M7 3.500H13Q16 4 16 10T13 16.500H7Q4 16 4 10T7 3.500M13 3.500Q10 4 10 10T13 16.500',
        'M6.500 3.500H13.500Q17 6 17 10T13.500 16.500H6.500L2.500 10z'
    ]],
    ['Звезды и ленты', [
        star(9, 7.5, 4), star(11, 7.5, 4.5), star(4, 7.5, 2.5), star(5, 7.5, 3), star(6, 7.5, 4.2), star(7, 7.5, 5.5),
        [star(8, 7.5, 6), '8'], [star(10, 7.5, 6), '10'], [star(12, 8, 6.500), '12'],
        [star(16, 8, 6.500), '16'], [star(16, 8, 6), '24'], [star(18, 8, 6), '32'],
        'M6 13.500H2.500L4 10.500 2.500 7.500H6V5.500H14V7.500H17.500L16 10.500 17.500 13.500H14M5.500 7v8H9V12.500H11V15H14.500V7',
        'M6 6.500H2.500L4 9.500 2.500 12.500H6V14.500H14V12.500H17.500L16 9.500 17.500 6.500H14M5.500 13V5H9V7.500H11V5H14.500V13',
        'M5 14.500H2.500L4 11.500 2.500 8.500H5.500Q6 4.500 10 4.500T14.500 8.500H17.500L16 11.500 17.500 14.500H15M5.500 8v7H8.500V12.500Q10 11 11.500 12.500V15H14.500V8',
        'M5 5.500H2.500L4 8.500 2.500 11.500H5.500Q6 15.500 10 15.500T14.500 11.500H17.500L16 8.500 17.500 5.500H15M5.500 12V5H8.500V7.500Q10 9 11.500 7.500V5H14.500V12',
        'M5.500 3.500H17.500V6.500H14.500V16.500H2.500V14H5.500zM5.500 6.500H14.500M5.500 14V16.500',
        'M2.500 5.500H5.500V6.500H17.500V14.500H5.500V16.500H2.500zM5.500 6.500V14.500M14.500 6.500V4.500H17.500V6.500',
        'M2.500 5Q6 2 10 5T17.500 5V14.500Q14 17.500 10 14.500T2.500 14.500z',
        'M2.500 3.500Q6 7 10 4.500T17.500 3.500V16Q14 13 10 15.500T2.500 16z'
    ]],
    ['Выноски', [
        'M3.500 3.500H16.500V13.500H11L8.500 16.500V13.500H3.500z',
        'M6 3.500H14Q16.500 3.500 16.500 6V11Q16.500 13.500 14 13.500H11L8.500 16.500V13.500H6Q3.500 13.500 3.500 11V6Q3.500 3.500 6 3.500z',
        'M6 13.500Q2.500 12 2.500 9 3 4 10 4T17.500 9Q17 14 9.500 14L6 17z', cloud + 'M4.500 16v1.500M3 17.500v1',
        'M8.500 5.500H17.500V13.500H8.500zM8.500 7.500L2.500 14.500', 'M8.500 5.500H17.500V13.500H8.500zM8.500 8.500H5L3.500 14.500',
        'M8.500 4.500H17.500V12.500H8.500zM8.500 7.500H3.500V14.500L8 17',
        ['M9 7.500L2.500 14.500M8.500 5V14', '', 1], ['M8.500 8.500H5L3.500 14.500M8.500 5V14', '', 1], ['M8.500 7.500H3.500V14.500L8 17M8.500 4V13', '', 1],
        ['M9 7.500L2.500 14.500', '', 1], ['M8.500 8.500H5L3.500 14.500', '', 1],
        ['M8.500 7.500H3.500V14.500L8 17', '', 1],
        'M9.500 5.500H17.500V13.500H9.500zM7.500 7.500L2.500 14.500M7.500 5V14', 'M9.500 5.500H17.500V13.500H9.500zM7.500 8.500H5L3.500 14.500M7.500 5V14',
        'M9.500 4.500H17.500V12.500H9.500zM7.500 7.500H3.500V14.500L8 17M7.500 4V13'
    ]]
]

function cell(s, sel) {
    if (typeof s === 'string') s = [s]
    var out = '<path d="' + s[0] + '"/>'
    if (s[1] === 'A') out += '<text class="a" x="7" y="11">A</text>'
    else if (s[1]) out += '<text x="10" y="12.5">' + s[1] + '</text>'
    if (s[2]) out += '<path d="M8.500 5.500H17.500V13.500H8.500z" stroke-dasharray="1 1"/>'
    return '<button' + (sel ? ' class="sel"' : '') + '><svg width="20" height="20" viewBox="0 0 20 20">' + out + '</svg></button>'
}

document.getElementById('gallery').innerHTML = groups.map(function (g, i) {
    return '<h3>' + g[0] + '</h3><div class="cells">' + g[1].map(function (s, j) {
        return cell(s, i === 0 && j === 0)
    }).join('') + '</div>'
}).join('')

// rulers: number, dot, tick, dot
function ruler(id, start, count) {
    var html = ''
    for (var i = 0; i < count; i++) {
        var n = Math.abs(i / 4 - start)
        var inner = i % 4 === 2 ? '<i></i>' : '<i class="dot"></i>'
        if (i % 4 === 0) inner = n ? n : ''
        html += '<div class="mk">' + inner + '</div>'
    }
    document.getElementById(id).innerHTML = html
}

ruler('hruler', 4, 84)
ruler('vruler', 2, 54)
```
